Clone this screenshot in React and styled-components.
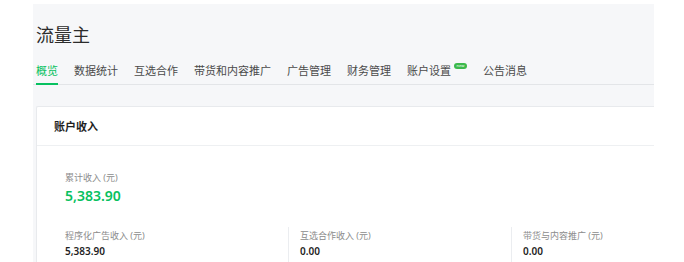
import React from "react"
import styled, { createGlobalStyle } from "styled-components"

const tabs = ["概览", "数据统计", "互选合作", "带货和内容推广", "广告管理", "财务管理", "账户设置", "公告消息"]

const stats = [
  { label: "程序化广告收入 (元)", value: "5,383.90" },
  { label: "互选合作收入 (元)", value: "0.00" },
  { label: "带货与内容推广 (元)", value: "0.00" },
]

export default function App() {
  return (
    <>
      <GlobalStyle />
      <Page>
        <Title>流量主</Title>
        <Nav>
          {tabs.map((t, i) => (
            <Tab key={t} $active={i === 0}>
              {t}
              {t === "账户设置" && <Badge>new</Badge>}
            </Tab>
          ))}
        </Nav>
        <Card>
          <CardHeader>账户收入</CardHeader>
          <CardBody>
            <Label>累计收入 (元)</Label>
            <Total>5,383.90</Total>
            <Row>
              {stats.map((s, i) => (
                <Col key={s.label} $first={i === 0}>
                  <Label>{s.label}</Label>
                  <Value>{s.value}</Value>
                </Col>
              ))}
            </Row>
          </CardBody>
        </Card>
      </Page>
    </>
  )
}

const GlobalStyle = createGlobalStyle`
  body {
    margin: 0;
    background: #fff;
    font-family: "Noto Sans", "Noto Sans CJK SC", sans-serif;
    color: #353535;
  }
`
const Page = styled.div`
  margin: 4px 0 0 33px;
  width: 621px;
  height: 258px;
  overflow: hidden;
  background: #f6f7f9;
  padding-left: 3px;
  box-sizing: border-box;
`
const Title = styled.h1`
  margin: 0;
  padding-top: 19px;
  font-size: 18px;
  line-height: 24px;
  font-weight: 400;
  color: #2b2b2b;
`
const Nav = styled.div`
  margin: 16px 0 0 -3px;
  padding-left: 3px;
  display: flex;
  gap: 16px;
  border-bottom: 1px solid #e3e5e8;
`
const Tab = styled.div`
  font-size: 11px;
  line-height: 16px;
  padding-bottom: 4px;
  margin-bottom: -1px;
  border-bottom: 2px solid ${(p) => (p.$active ? "#07c160" : "transparent")};
  color: ${(p) => (p.$active ? "#07c160" : "#4a4a4a")};
  display: flex;
  align-items: flex-start;
`
const Badge = styled.span`
  margin: 0 0 0 3px;
  width: 13px;
  height: 6px;
  border-radius: 3px;
  background: #3cb94c;
  color: #fff;
  font-size: 4px;
  line-height: 6px;
  text-align: center;
`
const Card = styled.div`
  margin-top: 21px;
  background: #fff;
  border: 1px solid #e8eaed;
  border-right: none;
  border-radius: 2px 0 0 0;
  margin-right: -4px;
`
const CardHeader = styled.div`
  height: 38px;
  line-height: 40px;
  padding-left: 17px;
  font-size: 11px;
  font-weight: 700;
  color: #1f1f1f;
  border-bottom: 1px solid #eef0f2;
`
const CardBody = styled.div`
  padding: 25px 0 0 28px;
`
const Label = styled.div`
  font-size: 9px;
  line-height: 13px;
  color: #8c8c8c;
`
const Total = styled.div`
  margin-top: 2px;
  font-size: 14px;
  line-height: 20px;
  font-weight: 600;
  color: #07c160;
`
const Row = styled.div`
  margin-top: 21px;
  display: grid;
  grid-template-columns: 223px 223px 1fr;
`
const Col = styled.div`
  padding: 2px 0 20px ${(p) => (p.$first ? "0" : "11px")};
  border-left: ${(p) => (p.$first ? "none" : "1px solid #ebedf0")};
`
const Value = styled.div`
  margin-top: 2px;
  font-size: 10px;
  line-height: 15px;
  font-weight: 600;
  color: #1f1f1f;
`
